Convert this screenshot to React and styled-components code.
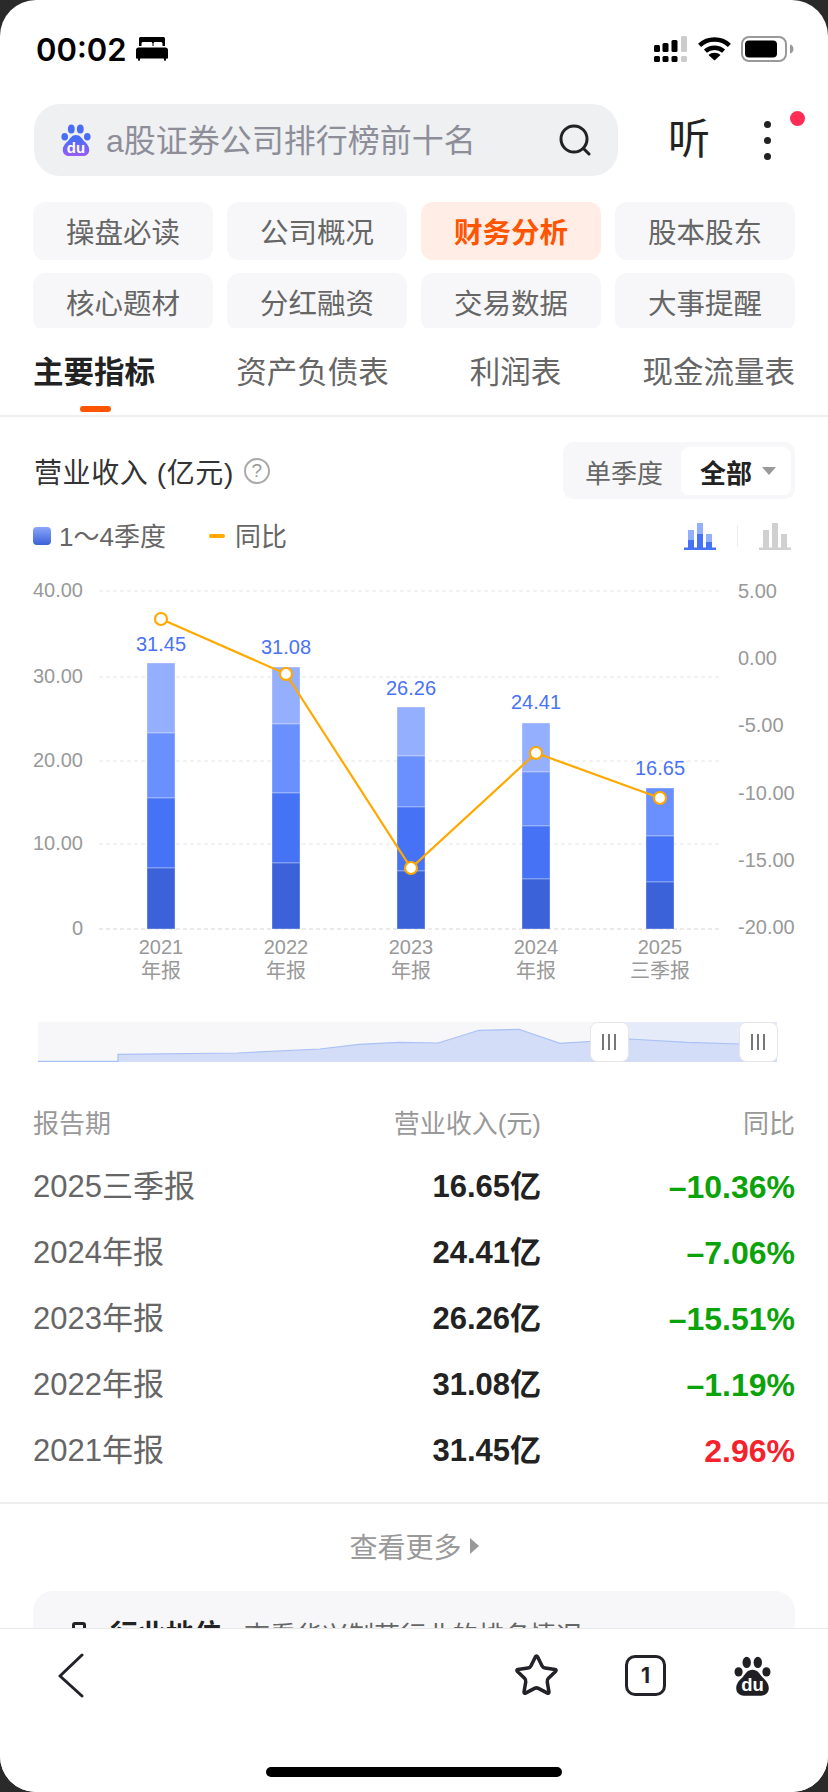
import React from 'react';
import styled, { createGlobalStyle } from 'styled-components';
import { Star } from 'lucide-react';

const GlobalStyle = createGlobalStyle`
  html, body { margin: 0; padding: 0; background: #2a2a2a; }
  * { box-sizing: border-box; }
  body { font-family: "Liberation Sans", "Noto Sans CJK SC", sans-serif; }
`;

const navItems = ['操盘必读', '公司概况', '财务分析', '股本股东', '核心题材', '分红融资', '交易数据', '大事提醒'];
const subTabs = ['主要指标', '资产负债表', '利润表', '现金流量表'];

const BAR_COLORS = ['#95afff', '#6a90ff', '#4672f5', '#3b62d8'];
const BASE_Y = 929;

// tops = pixel y of each stacked segment, top one first
const bars = [
  { x: 161, year: '2021', kind: '年报', value: '31.45', labelY: 644, tops: [663, 733, 798, 868], lineY: 619 },
  { x: 286, year: '2022', kind: '年报', value: '31.08', labelY: 647, tops: [667, 724, 793, 863], lineY: 674 },
  { x: 411, year: '2023', kind: '年报', value: '26.26', labelY: 688, tops: [707, 756, 807, 871], lineY: 868 },
  { x: 536, year: '2024', kind: '年报', value: '24.41', labelY: 702, tops: [723, 772, 826, 879], lineY: 753 },
  { x: 660, year: '2025', kind: '三季报', value: '16.65', labelY: 768, tops: [788, 836, 882], lineY: 798 },
];

const leftAxis = [
  { label: '40.00', y: 591 },
  { label: '30.00', y: 677 },
  { label: '20.00', y: 761 },
  { label: '10.00', y: 844 },
  { label: '0', y: 929 },
];
const rightAxis = [
  { label: '5.00', y: 591 },
  { label: '0.00', y: 658 },
  { label: '-5.00', y: 725 },
  { label: '-10.00', y: 793 },
  { label: '-15.00', y: 860 },
  { label: '-20.00', y: 927 },
];

const rows = [
  { period: '2025三季报', revenue: '16.65亿', change: '–10.36%', up: false },
  { period: '2024年报', revenue: '24.41亿', change: '–7.06%', up: false },
  { period: '2023年报', revenue: '26.26亿', change: '–15.51%', up: false },
  { period: '2022年报', revenue: '31.08亿', change: '–1.19%', up: false },
  { period: '2021年报', revenue: '31.45亿', change: '2.96%', up: true },
];

const Shell = styled.div`
  width: 828px;
  height: 1792px;
  background: #2a2a2a;
  overflow: hidden;
`;

const Screen = styled.div`
  width: 828px;
  height: 1792px;
  background: #fff;
  border-radius: 36px;
  overflow: hidden;
  display: flex;
  flex-direction: column;
`;

const Content = styled.div`
  flex: 1;
  min-height: 0;
  overflow: hidden;
`;

const StatusBar = styled.div`
  height: 98px;
  padding: 0 34px 0 36px;
  display: flex;
  align-items: center;
  justify-content: space-between;
`;

const StatusLeft = styled.div`
  display: flex;
  align-items: center;
  gap: 9px;
`;

const Time = styled.span`
  font-family: Inter, "Liberation Sans", sans-serif;
  font-size: 31px;
  font-weight: 600;
  color: #000;
`;

const StatusRight = styled.div`
  display: flex;
  align-items: center;
  gap: 10px;
`;

const SearchRow = styled.div`
  margin-top: 6px;
  padding-left: 34px;
  height: 72px;
  display: flex;
  align-items: center;
`;

const SearchBar = styled.div`
  width: 584px;
  height: 72px;
  border-radius: 26px;
  background: #eff0f2;
  padding: 0 27px;
  display: flex;
  align-items: center;
`;

const SearchText = styled.span`
  flex: 1;
  margin-left: 15px;
  padding-bottom: 4px;
  font-size: 32px;
  color: #8e8e99;
`;

const ListenBtn = styled.span`
  margin-left: 50px;
  font-size: 42px;
  line-height: 48px;
  color: #222;
`;

const Menu = styled.div`
  position: relative;
  margin-left: 54px;
  display: flex;
  flex-direction: column;
  gap: 9px;
`;

const Dot = styled.span`
  width: 7px;
  height: 7px;
  border-radius: 50%;
  background: #222;
`;

const RedDot = styled.span`
  position: absolute;
  left: 26px;
  top: -10px;
  width: 15px;
  height: 15px;
  border-radius: 50%;
  background: #ff2d55;
`;

const NavGrid = styled.div`
  margin: 26px 33px 0;
  height: 126px;
  overflow: hidden;
  display: grid;
  grid-template-columns: repeat(4, 180px);
  grid-auto-rows: 58px;
  column-gap: 14px;
  row-gap: 13px;
`;

const NavItem = styled.div`
  border-radius: 12px;
  padding-bottom: 2px;
  display: flex;
  align-items: center;
  justify-content: center;
  font-size: 28.5px;
  font-weight: ${p => (p.$active ? 700 : 400)};
  color: ${p => (p.$active ? '#ff5500' : '#666')};
  background: ${p => (p.$active ? '#ffede6' : '#f7f7f9')};
`;

const SubTabs = styled.div`
  height: 89px;
  padding: 0 33px;
  border-bottom: 2px solid #f0f0f0;
  display: flex;
  justify-content: space-between;
`;

const SubTab = styled.div`
  position: relative;
  padding-top: 25px;
  font-size: 30.5px;
  line-height: 38px;
  font-weight: ${p => (p.$active ? 700 : 400)};
  color: ${p => (p.$active ? '#222' : '#666')};
`;

const SubTabMark = styled.span`
  position: absolute;
  left: 47px;
  top: 78px;
  width: 31px;
  height: 6px;
  border-radius: 3px;
  background: #ff5500;
`;

const SectionHead = styled.div`
  margin-top: 25px;
  padding: 0 33px 0 34px;
  height: 57px;
  display: flex;
  align-items: center;
  justify-content: space-between;
`;

const SectionTitle = styled.div`
  display: flex;
  align-items: center;
  gap: 10px;
  font-size: 28px;
  letter-spacing: 0.6px;
  color: #333;
`;

const HelpMark = styled.span`
  width: 26px;
  height: 26px;
  border-radius: 50%;
  border: 2px solid #aaa;
  display: flex;
  align-items: center;
  justify-content: center;
  font-size: 19px;
  letter-spacing: 0;
  color: #999;
`;

const Segment = styled.div`
  width: 232px;
  height: 57px;
  padding: 5px 4px 4px 22px;
  border-radius: 10px;
  background: #f7f7f9;
  display: flex;
  align-items: center;
  justify-content: space-between;
  font-size: 26px;
  color: #666;
`;

const SegmentActive = styled.div`
  width: 110px;
  height: 48px;
  padding-left: 19px;
  border-radius: 8px;
  background: #fff;
  display: flex;
  align-items: center;
  gap: 10px;
  font-weight: 700;
  color: #222;
`;

const Caret = styled.span`
  width: 0;
  height: 0;
  border-left: 7px solid transparent;
  border-right: 7px solid transparent;
  border-top: 8px solid #999;
`;

const Legend = styled.div`
  margin: 22px 0 1px;
  padding: 0 37px 0 33px;
  height: 30px;
  display: flex;
  align-items: center;
  font-size: 26px;
  color: #666;
`;

const LegendLabel = styled.span`
  margin-bottom: 4px;
`;

const LegendSwatch = styled.span`
  width: 18px;
  height: 18px;
  border-radius: 4px;
  margin-right: 8px;
  background: linear-gradient(#8aa6f8, #3b62d8);
`;

const LegendDash = styled.span`
  width: 16px;
  height: 4px;
  border-radius: 2px;
  margin: 0 10px 0 43px;
  background: #ffa800;
`;

const LegendTools = styled.div`
  margin-left: auto;
  display: flex;
  align-items: center;
  gap: 21px;
`;

const ToolDivider = styled.span`
  width: 1px;
  height: 22px;
  background: #eee;
`;

const ChartSvg = styled.svg`
  display: block;
  width: 828px;
  height: 448px;
  font-family: "Liberation Sans", "Noto Sans CJK SC", sans-serif;
`;

const BrushSvg = styled.svg`
  display: block;
  margin-top: 22px;
  width: 828px;
  height: 42px;
`;

const Table = styled.div`
  margin-top: 37px;
  padding: 0 33px;
`;

const TableHead = styled.div`
  height: 46px;
  margin-bottom: 7px;
  display: grid;
  grid-template-columns: 1fr 230px 254px;
  align-items: center;
  font-size: 26px;
  line-height: 36px;
  color: #999;
`;

const Row = styled.div`
  height: 66px;
  display: grid;
  grid-template-columns: 1fr 230px 254px;
  align-items: center;
  font-size: 31px;
  line-height: 40px;
`;

const Period = styled.span`
  color: #666;
`;

const Revenue = styled.span`
  text-align: right;
  font-weight: 700;
  color: #222;
`;

const Change = styled.span`
  text-align: right;
  font-size: 32px;
  font-weight: 700;
  color: ${p => (p.$up ? '#f5222d' : '#0aa30a')};
`;

const RightCell = styled.span`
  text-align: right;
`;

const More = styled.div`
  margin-top: 18px;
  border-top: 2px solid #f0f0f0;
  height: 89px;
  padding-bottom: 4px;
  display: flex;
  align-items: center;
  justify-content: center;
  gap: 8px;
  font-size: 28px;
  color: #999;
`;

const MoreArrow = styled.span`
  width: 0;
  height: 0;
  border-top: 8px solid transparent;
  border-bottom: 8px solid transparent;
  border-left: 9px solid #999;
`;

const InfoCard = styled.div`
  margin: 0 33px;
  height: 120px;
  padding: 26px 28px 0 39px;
  border-radius: 20px;
  background: #f7f7f9;
  display: flex;
  align-items: flex-start;
  font-size: 26px;
  line-height: 38px;
  color: #666;
`;

const InfoTitle = styled.span`
  margin: 0 22px 0 24px;
  font-size: 28px;
  font-weight: 700;
  color: #222;
`;

const InfoIcon = styled.span`
  width: 14px;
  height: 28px;
  margin-top: 5px;
  border: 3px solid #222;
  border-radius: 3px;
`;

const BottomBar = styled.div`
  flex: none;
  height: 164px;
  padding-top: 25px;
  border-top: 1px solid #e8e8e8;
  background: #fff;
  display: flex;
  flex-direction: column;
  align-items: center;
`;

const BottomRow = styled.div`
  width: 100%;
  height: 43px;
  padding: 0 57px 0 58px;
  display: flex;
  align-items: center;
`;

const BottomIcons = styled.div`
  margin-left: auto;
  display: flex;
  align-items: center;
  gap: 68px;
`;

const StarIcon = styled(Star)`
  margin: 0 -3px;
`;

const TabCount = styled.div`
  width: 41px;
  height: 41px;
  border: 3.5px solid #222228;
  border-radius: 10px;
  display: flex;
  align-items: center;
  justify-content: center;
  font-family: Inter, "Liberation Sans", sans-serif;
  font-size: 21px;
  font-weight: 700;
  color: #222228;
`;

const HomeIndicator = styled.div`
  width: 296px;
  height: 10px;
  margin-top: 70px;
  border-radius: 5px;
  background: #000;
`;

const BedIcon = () => (
  <svg width="32" height="24" viewBox="0 0 32 24">
    <path fill="#000" d="M3 1.5C3 .6 3.8 0 4.7 0h22.6c.9 0 1.7.6 1.7 1.5V9h-2.5V6.6c0-1-.8-1.6-1.7-1.6h-5.6c-1 0-1.7.7-1.7 1.6V9h-1V6.6c0-1-.7-1.6-1.7-1.6H7.2c-1 0-1.7.7-1.7 1.6V9H3z" />
    <path fill="#000" d="M2.4 10.5h27.2c1.3 0 2.4 1 2.4 2.4v8.5h-1.7L29.5 24h-1l-.8-2.6H4.3L3.5 24h-1l-.8-2.6H0v-8.5c0-1.4 1.1-2.4 2.4-2.4z" />
  </svg>
);

const SignalIcon = () => (
  <svg width="34" height="26" viewBox="0 0 34 26">
    <rect x="0" y="9" width="6" height="7" rx="1.500" fill="#000" />
    <rect x="8.500" y="7" width="6" height="9" rx="1.500" fill="#000" />
    <rect x="17.500" y="4" width="6" height="12" rx="1.500" fill="#000" />
    <rect x="27" y="0" width="6" height="16" rx="1.500" fill="#ccc" />
    <rect x="0" y="20" width="6" height="6" rx="1.500" fill="#000" />
    <rect x="8.500" y="20" width="6" height="6" rx="1.500" fill="#000" />
    <rect x="17.500" y="20" width="6" height="6" rx="1.500" fill="#000" />
    <rect x="27" y="20" width="6" height="6" rx="1.500" fill="#ccc" />
  </svg>
);

const WifiIcon = () => (
  <svg width="33" height="24" viewBox="0 0 33 24" fill="none" stroke="#000" strokeWidth="4.400">
    <path d="M1.600 8.400C10 .6 23 .6 31.400 8.400" />
    <path d="M7.400 14.200c5.200-4.600 13-4.600 18.200 0" />
    <path fill="#000" stroke="none" d="M16.500 23.500l-6-5.600c3.400-2.800 8.600-2.800 12 0z" />
  </svg>
);

const BatteryIcon = () => (
  <svg width="53" height="26" viewBox="0 0 53 26">
    <rect x="1" y="1" width="44" height="24" rx="7" fill="none" stroke="#999" strokeWidth="2" />
    <rect x="4" y="4.500" width="32" height="17" rx="4" fill="#000" />
    <path fill="#999" d="M49 8.500c2 .4 3.500 2.300 3.500 4.500s-1.500 4.100-3.500 4.500z" />
  </svg>
);

const PawIcon = ({ width, height, toe, body, du, gradient }) => (
  <svg width={width} height={height} viewBox="0 0 30 32">
    {gradient && (
      <defs>
        <linearGradient id="pawBody" x1="0" y1="0" x2="0" y2="1">
          <stop offset="0.2" stopColor="#4a6df5" />
          <stop offset="1" stopColor="#9a5cf5" />
        </linearGradient>
      </defs>
    )}
    <ellipse cx="3.700" cy="12.700" rx="3.300" ry="3.800" fill={toe} />
    <ellipse cx="10.300" cy="5" rx="3.400" ry="4.600" fill={toe} />
    <ellipse cx="19.300" cy="5" rx="3.400" ry="4.600" fill={toe} />
    <ellipse cx="26.300" cy="12.700" rx="3.300" ry="3.800" fill={toe} />
    <path
      fill={gradient ? 'url(#pawBody)' : body}
      d="M15 11C11 11 9.500 14 7 17 4 20 1.800 22 1.800 26 1.800 30 5 32 8 32L22 32C25 32 28.200 30 28.200 26 28.200 22 26 20 23 17 20.500 14 19 11 15 11Z"
    />
    <text x="15" y="28.500" textAnchor="middle" fontSize="15" fontWeight="700" fill={du} fontFamily="Liberation Sans, sans-serif">
      du
    </text>
  </svg>
);

const SearchIcon = () => (
  <svg width="32" height="32" viewBox="0 0 32 32" fill="none" stroke="#222" strokeWidth="3" strokeLinecap="round">
    <circle cx="15" cy="15" r="13" />
    <path d="M24.500 24.500L30 30" />
  </svg>
);

const BarToggleIcon = ({ light, mid, base }) => (
  <svg width="32" height="27" viewBox="0 0 32 27">
    <rect x="4" y="7" width="6" height="18" fill={light} />
    <rect x="13" y="0" width="6" height="25" fill={light} />
    <rect x="22" y="11" width="6" height="14" fill={light} />
    <rect x="4" y="17" width="6" height="8" fill={mid} />
    <rect x="13" y="11" width="6" height="14" fill={mid} />
    <rect x="22" y="19" width="6" height="6" fill={mid} />
    <rect x="0" y="24.500" width="32" height="2.500" fill={base} />
  </svg>
);

const BackIcon = () => (
  <svg width="26" height="45" viewBox="0 0 26 45" fill="none" stroke="#222228" strokeWidth="3" strokeLinecap="round" strokeLinejoin="round">
    <path d="M24 2L2 23 24 43" />
  </svg>
);

const Chart = () => {
  const linePoints = bars.map(b => `${b.x},${b.lineY}`).join(' ');
  return (
    <ChartSvg viewBox="0 552 828 448">
      {leftAxis.map(a => (
        <g key={a.label}>
          <line x1="99" x2="721" y1={a.y} y2={a.y} stroke={a.label === '0' ? '#e4e4e4' : '#eee'} strokeWidth="1.500" strokeDasharray="4 3" />
          <text x="83" y={a.y + 6} textAnchor="end" fontSize="20" fill="#999">{a.label}</text>
        </g>
      ))}
      {rightAxis.map(a => (
        <text key={a.label} x="738" y={a.y + 7} fontSize="20" fill="#999">{a.label}</text>
      ))}
      {bars.map(b => {
        const offset = BAR_COLORS.length - b.tops.length;
        return (
          <g key={b.year}>
            {b.tops.map((top, i) => (
              <rect
                key={top}
                x={b.x - 14}
                y={top}
                width="28"
                height={(b.tops[i + 1] || BASE_Y) - top}
                fill={BAR_COLORS[i + offset]}
                stroke="#fff"
                strokeOpacity="0.35"
                strokeWidth="1"
              />
            ))}
            <text x={b.x} y={b.labelY + 7} textAnchor="middle" fontSize="20" fill="#4a72f5">{b.value}</text>
            <text x={b.x} y="954" textAnchor="middle" fontSize="20" fill="#999">{b.year}</text>
            <text x={b.x} y="978" textAnchor="middle" fontSize="20" fill="#999">{b.kind}</text>
          </g>
        );
      })}
      <polyline points={linePoints} fill="none" stroke="#ffa800" strokeWidth="2.200" />
      {bars.map(b => (
        <circle key={b.year} cx={b.x} cy={b.lineY} r="6" fill="#fff" stroke="#ffa800" strokeWidth="2.200" />
      ))}
    </ChartSvg>
  );
};

const BrushHandle = ({ x }) => (
  <g>
    <rect x={x + 0.5} y="0.5" width="38" height="39" rx="7" fill="#fff" stroke="#e6e6e6" />
    <rect x={x + 12} y="12" width="2" height="16" fill="#777" />
    <rect x={x + 18} y="12" width="2" height="16" fill="#777" />
    <rect x={x + 24} y="12" width="2" height="16" fill="#777" />
  </g>
);

const AREA_LINE = 'M38 39.300H118V32.300L238 31 320 27 359 22.300 399 20.300 438 21 479 8.300 519 7.300 560 21.300 629 17 687 20.300 740 22 777 22';

const Brush = () => (
  <BrushSvg viewBox="0 0 828 42">
    <rect x="38" y="0" width="572" height="40" fill="#f7f7f9" />
    <rect x="610" y="0" width="167" height="40" fill="#e6ebfa" />
    <path d={`${AREA_LINE}V40H38Z`} fill="#d3ddf8" />
    <path d={AREA_LINE} fill="none" stroke="#a9c1f5" strokeWidth="1.200" />
    <BrushHandle x={590} />
    <BrushHandle x={739} />
  </BrushSvg>
);

export default function App() {
  return (
    <Shell>
      <GlobalStyle />
      <Screen>
        <Content>
          <StatusBar>
            <StatusLeft>
              <Time>00:02</Time>
              <BedIcon />
            </StatusLeft>
            <StatusRight>
              <SignalIcon />
              <WifiIcon />
              <BatteryIcon />
            </StatusRight>
          </StatusBar>

          <SearchRow>
            <SearchBar>
              <PawIcon width={30} height={32} toe="#4a6df5" du="#fff" gradient />
              <SearchText>a股证券公司排行榜前十名</SearchText>
              <SearchIcon />
            </SearchBar>
            <ListenBtn>听</ListenBtn>
            <Menu>
              <Dot />
              <Dot />
              <Dot />
              <RedDot />
            </Menu>
          </SearchRow>

          <NavGrid>
            {navItems.map(item => (
              <NavItem key={item} $active={item === '财务分析'}>{item}</NavItem>
            ))}
          </NavGrid>

          <SubTabs>
            {subTabs.map((tab, i) => (
              <SubTab key={tab} $active={i === 0}>
                {tab}
                {i === 0 && <SubTabMark />}
              </SubTab>
            ))}
          </SubTabs>

          <SectionHead>
            <SectionTitle>
              营业收入 (亿元)
              <HelpMark>?</HelpMark>
            </SectionTitle>
            <Segment>
              单季度
              <SegmentActive>
                全部
                <Caret />
              </SegmentActive>
            </Segment>
          </SectionHead>

          <Legend>
            <LegendSwatch />
            <LegendLabel>1～4季度</LegendLabel>
            <LegendDash />
            <LegendLabel>同比</LegendLabel>
            <LegendTools>
              <BarToggleIcon light="#95afff" mid="#4672f5" base="#4672f5" />
              <ToolDivider />
              <BarToggleIcon light="#d0d0d0" mid="#d0d0d0" base="#d0d0d0" />
            </LegendTools>
          </Legend>

          <Chart />
          <Brush />

          <Table>
            <TableHead>
              <span>报告期</span>
              <RightCell>营业收入(元)</RightCell>
              <RightCell>同比</RightCell>
            </TableHead>
            {rows.map(row => (
              <Row key={row.period}>
                <Period>{row.period}</Period>
                <Revenue>{row.revenue}</Revenue>
                <Change $up={row.up}>{row.change}</Change>
              </Row>
            ))}
          </Table>

          <More>
            查看更多
            <MoreArrow />
          </More>

          <InfoCard>
            <InfoIcon />
            <InfoTitle>行业地位</InfoTitle>
            查看华兴制药行业的排名情况
          </InfoCard>
        </Content>

        <BottomBar>
          <BottomRow>
            <BackIcon />
            <BottomIcons>
              <StarIcon size={47} strokeWidth={1.8} color="#222228" />
              <TabCount>1</TabCount>
              <PawIcon width={37} height={40} toe="#1f1f24" body="#1f1f24" du="#fff" />
            </BottomIcons>
          </BottomRow>
          <HomeIndicator />
        </BottomBar>
      </Screen>
    </Shell>
  );
}
